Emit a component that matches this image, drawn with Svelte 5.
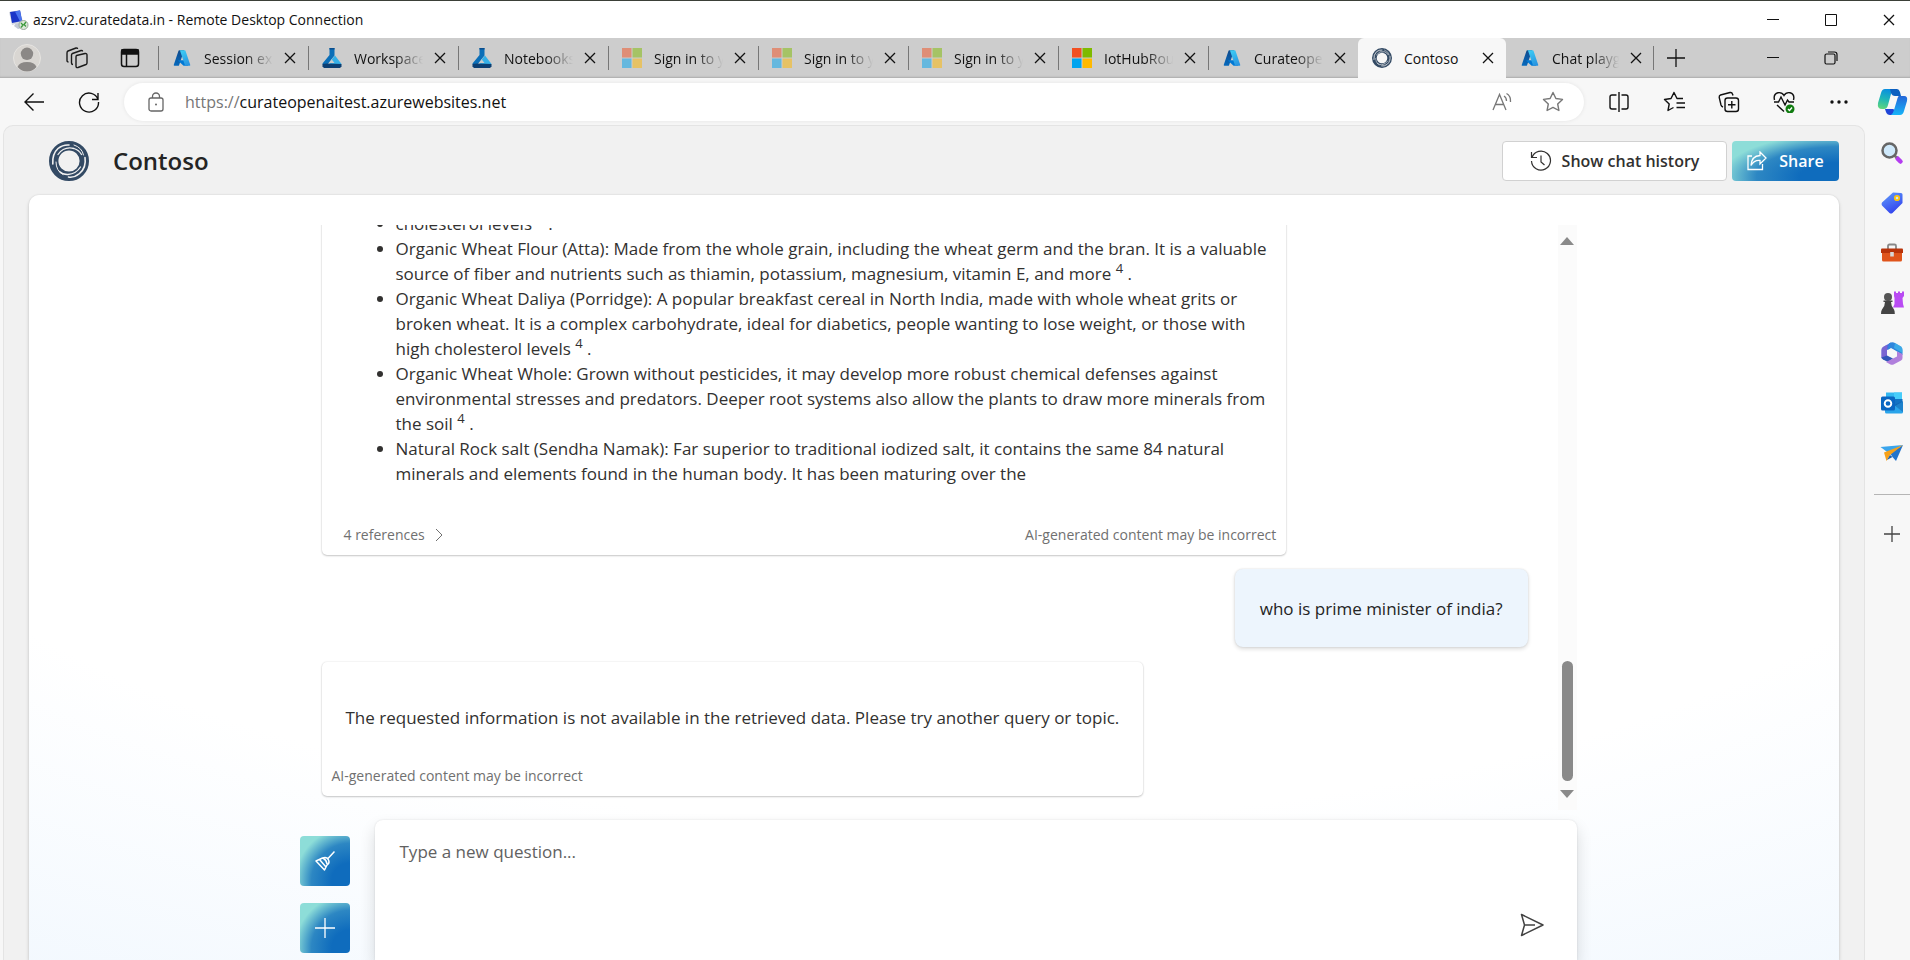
<script lang="ts">
	type Tab = { title: string; icon: string; active?: boolean }

	const tabs: Tab[] = [
		{ title: "Session exp", icon: "azure" },
		{ title: "Workspaces", icon: "lab" },
		{ title: "Notebooks", icon: "lab" },
		{ title: "Sign in to y", icon: "microsoft-faded" },
		{ title: "Sign in to y", icon: "microsoft-faded" },
		{ title: "Sign in to y", icon: "microsoft-faded" },
		{ title: "IotHubRout", icon: "microsoft" },
		{ title: "Curateopen", icon: "azure" },
		{ title: "Contoso", icon: "contoso", active: true },
		{ title: "Chat playgr", icon: "azure" },
	]

	const apps = [
		{ name: "search", label: "Search" },
		{ name: "tag", label: "Shopping" },
		{ name: "toolbox", label: "Tools" },
		{ name: "chess", label: "Games" },
		{ name: "m365", label: "Microsoft 365" },
		{ name: "outlook", label: "Outlook" },
		{ name: "drop", label: "Drop" },
	]

	let question = $state("")
</script>

{#snippet icon(name: string)}
	{#if name === "azure"}
		<svg viewBox="0 0 96 96" width="18" height="18" aria-hidden="true">
			<path fill="url(#azure-dark)" d="M33.3 6.5h26L32.3 86.600a4.200 4.200 0 0 1-3.900 2.900H8.100a4.100 4.100 0 0 1-3.900-5.500L29.400 9.400a4.200 4.200 0 0 1 3.900-2.900z" />
			<path fill="#0078d4" d="M71.200 60.300h-41.300a1.900 1.900 0 0 0-1.300 3.300l26.500 24.700a4.200 4.200 0 0 0 2.900 1.200h23.300z" />
			<path fill="url(#azure-light)" d="M66.600 9.400a4.100 4.100 0 0 0-3.900-2.900H33.600a4.100 4.100 0 0 1 4 2.900L62.800 84a4.100 4.100 0 0 1-4 5.500h29a4.100 4.100 0 0 0 4-5.500z" />
		</svg>
	{:else if name === "lab"}
		<svg viewBox="0 0 20 20" width="20" height="20" aria-hidden="true">
			<path fill="#0b6fb8" d="M7.500 0h5v7.500l-2 2.500L5 17H1L.500 15.500 7.500 7z" />
			<path fill="#0a4d8c" d="M7.500 0h5v1.500h-5z" />
			<path fill="#35b0e8" d="M10.500 10.500 13 7.500l6.500 8.500-1.500 2H7z" />
			<path fill="#cdcdcd" d="m9.800 11.500 2.700 3.500H7.500z" />
			<path fill="#0c3f73" d="M.500 16 5 15.500 19.500 16v2.500L18 20H2L.500 18.500z" />
		</svg>
	{:else if name === "microsoft" || name === "microsoft-faded"}
		<svg viewBox="0 0 21 21" width="20" height="20" opacity={name === "microsoft" ? 1 : 0.5} aria-hidden="true">
			<path fill="#f25022" d="M0 0h10v10H0z" />
			<path fill="#7fba00" d="M11 0h10v10H11z" />
			<path fill="#00a4ef" d="M0 11h10v10H0z" />
			<path fill="#ffb900" d="M11 11h10v10H11z" />
		</svg>
	{:else if name === "contoso"}
		<svg class="contoso" viewBox="0 0 40 40" fill="none" stroke="#f1f1f1" stroke-linecap="round" aria-hidden="true">
			<circle cx="20" cy="20" r="15.300" stroke="#334a64" stroke-width="9.400" />
			<path stroke-width="1.600" d="M3.800 23Q3 13 9 7.500 14 3.500 20 4" />
			<path stroke-width="1.300" d="M9 13.500Q15 5 25 7.500q5 1.500 7.500 6" />
			<path stroke-width="1.600" d="M36 16.500q1.500 10-5.500 16Q25 37 19.500 36" />
			<path stroke-width="1.300" d="M31.500 26Q27 33 19 33.500q-5 .300-8.500-3" />
			<path stroke-width="1" d="M7 21q0 9 7 12.500M25 4q8 2.500 9.500 10" />
		</svg>
	{:else if name === "search"}
		<svg viewBox="0 0 24 24" width="24" height="24" aria-hidden="true">
			<path stroke="#b43cf0" stroke-width="4.500" stroke-linecap="round" d="m17.500 17.500 3 3" />
			<path stroke="#777" stroke-width="2.500" d="m13.500 13.500 3 3" />
			<circle cx="9.500" cy="9.500" r="7" fill="#cfe9fb" stroke="#666" stroke-width="2.500" />
		</svg>
	{:else if name === "tag"}
		<svg viewBox="0 0 24 24" width="24" height="24" aria-hidden="true">
			<path fill="url(#tag-blue)" d="M13 1.500 21 2q1.500 0 1.500 1.500V12L12.500 22q-1.500 1-3 0L2 14.500q-1-1.500 0-3z" />
			<circle cx="17" cy="7" r="2.200" fill="#cfe0ff" stroke="#fdc60a" stroke-width="1.800" />
		</svg>
	{:else if name === "toolbox"}
		<svg viewBox="0 0 24 24" width="24" height="24" aria-hidden="true">
			<path fill="none" stroke="#888" stroke-width="1.800" d="M8 8V5q0-1.500 1.500-1.500h5Q16 3.500 16 5v3" />
			<path fill="#e0541b" d="M2 11h20v8q0 1.500-1.500 1.500h-17Q2 20.500 2 19z" />
			<path fill="#b8330a" d="M2 7.500h20q1 0 1 1V12H1V8.500q0-1 1-1z" />
			<path fill="#d8d8d8" d="M10.200 11h3.600v4.500h-3.600z" />
		</svg>
	{:else if name === "chess"}
		<svg viewBox="0 0 24 24" width="24" height="24" aria-hidden="true">
			<path fill="#b94bf3" d="M14 .500h2V2h2V.500h2V2h2V.500h2V5l-1.500 2 .500 6 1 3.500H13l1.500-3.500V7L14 5z" />
			<circle cx="8" cy="6" r="4" fill="#555" />
			<path fill="#444" d="M3.500 9.500h9V11H11q0 4 3 7.500.800 1 .800 4.500H1q0-3.500 1-4.500 3-3.500 3-7.500H3.500z" />
		</svg>
	{:else if name === "m365"}
		<svg viewBox="0 0 24 24" width="24" height="24" aria-hidden="true">
			<path fill="#4f6be0" d="M11 1.500 3 6Q1.500 7 1.500 9v8L7 15.500V9l5-3z" />
			<path fill="#8b62cc" d="M1.500 9q0-2 1.500-3l4-2.300V15.500l-5.500 1.700z" opacity=".7" />
			<path fill="#2f86dc" d="M9 2.500q3-2 6-.500l6 3.500Q22.500 6.500 22.500 9v5l-5.500-3.500L11 7 7.500 9z" />
			<path fill="#45c3f0" d="M15 2l6 3.500q1.500 1 1.500 3.500v3L14 7z" opacity=".6" />
			<path fill="#3155b8" d="M1.500 16.500 7 14.500l6 3L8 21l-5-2.500q-1.500-1-1.500-2z" />
			<path fill="#b07fdc" d="M22.500 13v4q0 1.500-1.500 2.500l-7 3.800q-2 1-4 0L6 21l11-5.500v-5z" />
			<path fill="#f7f7f7" d="m12 8 4 2.300v4L12 16.500l-4-2.200v-4z" />
		</svg>
	{:else if name === "outlook"}
		<svg viewBox="0 0 24 24" width="24" height="24" aria-hidden="true">
			<path fill="#35b8f1" d="M6 1.500h16V13H6z" />
			<path fill="#1272c4" d="M13 8h9.500v10H13z" />
			<path fill="#47cdfa" d="M14 1.500h8V8h-8z" />
			<path fill="#2aa4ea" d="M5 15.500h9l9-5V21q0 1.500-1.500 1.500h-15Q5 22.500 5 21z" />
			<path fill="#0f5eac" d="m14 14 9-4v11z" opacity=".5" />
			<rect x="1" y="5.500" width="14" height="14" rx="1.500" fill="#0a66c2" />
			<circle cx="8" cy="12.500" r="3.300" fill="none" stroke="#fff" stroke-width="1.900" />
		</svg>
	{:else if name === "drop"}
		<svg viewBox="0 0 24 24" width="24" height="24" aria-hidden="true">
			<path fill="#3aa5ec" d="M.500 6 23 4 8.500 12z" />
			<path fill="#2274cc" d="m23 4-7 16-3.500-4-2.500-4z" />
			<path fill="#f6a11a" d="M23 4 4 11.500 6.500 20l3.500-6z" />
			<path fill="#1b5faf" d="m10 14 2.500 2-5.500 3z" />
		</svg>
	{:else if name === "copilot"}
		<svg viewBox="0 0 32 32" width="32" height="32" aria-hidden="true">
			<path fill="url(#copilot-left)" d="M9 3h9q-2 1-3 5l-3 11q-1 4-4 4H6q-5 0-4-6L5 7q1-4 4-4z" />
			<path fill="#0b5fc0" d="M14 3h7q2 0 3 3l1 4h-6q-3 0-4-3z" />
			<path fill="#1f45d8" d="M9 23h8l2 1-2 5h-3q-3 0-4-3z" />
			<path fill="url(#copilot-right)" d="M23 10h5q4 0 3 5l-3 10q-1 4-4 4h-9q2-1 3-5l3-10q1-4 2-4z" />
		</svg>
	{:else if name === "close"}
		<svg viewBox="0 0 12 12" width="12" height="12" fill="none" stroke="currentColor" stroke-width="1.300" aria-hidden="true">
			<path d="m1 1 10 10M11 1 1 11" />
		</svg>
	{:else if name === "minimize"}
		<svg viewBox="0 0 12 12" width="12" height="12" fill="none" stroke="currentColor" aria-hidden="true">
			<path d="M0 5.500h12" />
		</svg>
	{:else if name === "maximize"}
		<svg viewBox="0 0 12 12" width="12" height="12" fill="none" stroke="currentColor" aria-hidden="true">
			<path d="M.500.500h11v11H.500z" />
		</svg>
	{:else if name === "restore"}
		<svg viewBox="0 0 14 14" width="14" height="14" fill="none" stroke="currentColor" stroke-width="1.200" aria-hidden="true">
			<rect x="1" y="3" width="10" height="10" rx="1.500" />
			<path d="M4 1h6.500Q13 1 13 3.500V10" />
		</svg>
	{/if}
{/snippet}

{#snippet windowButtons(middle: string)}
	<div class="window-buttons">
		<button aria-label="Minimize">{@render icon("minimize")}</button>
		<button aria-label="Maximize">{@render icon(middle)}</button>
		<button aria-label="Close window">{@render icon("close")}</button>
	</div>
{/snippet}

<svg class="defs" width="0" height="0" aria-hidden="true">
	<defs>
		<linearGradient id="azure-dark" x1="0.600" y1="0" x2="0.300" y2="1">
			<stop offset="0" stop-color="#114a8b" />
			<stop offset="1" stop-color="#0669bc" />
		</linearGradient>
		<linearGradient id="azure-light" x1="0.300" y1="0" x2="0.700" y2="1">
			<stop offset="0" stop-color="#3ccbf4" />
			<stop offset="1" stop-color="#2892df" />
		</linearGradient>
		<linearGradient id="tag-blue" x1="0" y1="0" x2="0.500" y2="1">
			<stop offset="0" stop-color="#62a0fb" />
			<stop offset="1" stop-color="#3445ee" />
		</linearGradient>
		<linearGradient id="copilot-left" x1="0.500" y1="0" x2="0.300" y2="1">
			<stop offset="0" stop-color="#0a8fe0" />
			<stop offset="0.500" stop-color="#1fb6b8" />
			<stop offset="1" stop-color="#5fd67c" />
		</linearGradient>
		<linearGradient id="copilot-right" x1="0.500" y1="0" x2="0.500" y2="1">
			<stop offset="0" stop-color="#2466d8" />
			<stop offset="1" stop-color="#16b4f8" />
		</linearGradient>
	</defs>
</svg>

<div class="window">
	<header class="title-bar">
		<svg viewBox="0 0 20 20" width="20" height="20" aria-hidden="true">
			<path fill="#c3c9d6" d="M7 13h7l3 4-8 2-4-3z" />
			<path fill="#d5d9e2" d="m0 2 11-2 3 12-11 3z" />
			<path fill="#1a35c8" d="m1 2 10-1.500 2 10.500-10 2z" />
			<path fill="#4a74ee" d="m6 1.500 5-1 2 10.500-2 .500z" />
			<circle cx="14.500" cy="15" r="4.500" fill="#dbe8d8" stroke="#9aa89a" />
			<path fill="none" stroke="#3c9a3c" stroke-width="1.300" d="m12 13 2 2-2 2.500M17 12l-2 2.500 2 2" />
		</svg>
		<span class="title">azsrv2.curatedata.in - Remote Desktop Connection</span>
		{@render windowButtons("maximize")}
	</header>

	<div class="tab-strip">
		<div class="strip-tools">
			<button aria-label="Profile">
				<svg viewBox="0 0 28 28" width="28" height="28" aria-hidden="true">
					<circle cx="14" cy="14" r="13.500" fill="#d9d6d2" stroke="#e6e4e1" />
					<circle cx="14" cy="9.800" r="6.200" fill="#8b8886" />
					<path fill="#8b8886" d="M4.500 23q2-5 9.500-5t9.500 5q-4 4.500-9.500 4.500T4.500 23z" />
				</svg>
			</button>
			<button aria-label="Workspaces">
				<svg viewBox="0 0 22 22" width="22" height="22" fill="none" stroke="#1b1b1b" stroke-width="1.400" stroke-linejoin="round" aria-hidden="true">
					<path d="m10.500 8.500 8.500-2q2-.300 2 1.500v8q0 1-1 1.500l-8 3q-2 .500-2-1.500v-9q0-1 .500-1.500z" />
					<path d="M7 17.500q-1.500 0-1.500-1.500V8q0-1 1-1.500l8.500-3q1.500-.300 1.500 1" />
					<path d="M2.500 15Q1 15 1 13.500V6q0-1.500 1-2l8-3q1.500-.300 1.500 1" />
				</svg>
			</button>
			<button aria-label="Tab actions">
				<svg viewBox="0 0 20 20" width="20" height="20" fill="none" stroke="#111" stroke-width="1.500" aria-hidden="true">
					<rect x="1.500" y="1.500" width="17" height="17" rx="2.500" />
					<path fill="#111" d="M2 2h16v4H2z" />
					<path d="M6.500 6v12" />
				</svg>
			</button>
		</div>
		<div class="tabs">
			{#each tabs as tab}
				<div class="tab" class:active={tab.active}>
					<span class="favicon">{@render icon(tab.icon)}</span>
					<span class="tab-title">{tab.title}</span>
					<button class="tab-close" aria-label="Close tab">{@render icon("close")}</button>
				</div>
			{/each}
		</div>
		<button class="new-tab" aria-label="New tab">
			<svg viewBox="0 0 18 18" width="18" height="18" stroke="#111" stroke-width="1.300" aria-hidden="true"><path d="M9 0v18M0 9h18" /></svg>
		</button>
		{@render windowButtons("restore")}
	</div>

	<div class="toolbar">
		<button class="nav" aria-label="Back">
			<svg viewBox="0 0 22 20" width="22" height="20" fill="none" stroke="#111" stroke-width="1.400" aria-hidden="true"><path d="M10.500 1.500 2 10l8.500 8.500M2 10h19" /></svg>
		</button>
		<button class="nav" aria-label="Refresh">
			<svg viewBox="0 0 22 22" width="22" height="22" fill="none" stroke="#111" stroke-width="1.400" aria-hidden="true"><path d="M20 8.500A9.500 9.500 0 1 0 20.500 11M20 2v6.500h-6" /></svg>
		</button>
		<div class="address">
			<svg viewBox="0 0 16 20" width="16" height="20" fill="none" stroke="#666" stroke-width="1.300" aria-hidden="true">
				<rect x="1" y="6" width="14" height="13" rx="2" />
				<path d="M4.500 6V4.500a3.500 3.500 0 0 1 7 0V6" />
				<circle cx="8" cy="12.500" r="1" fill="#666" stroke="none" />
			</svg>
			<a href="https://curateopenaitest.azurewebsites.net"><span>https://</span>curateopenaitest.azurewebsites.net</a>
			<button class="in-address" aria-label="Read aloud">
				<svg viewBox="0 0 22 20" width="22" height="20" fill="none" stroke="#777" stroke-width="1.300" aria-hidden="true">
					<path d="M1 18 7.500 2.500 14 18M3.500 12.500h8M12 4q2.500 1.500 2.500 5M14.500 1.500Q19 4 18.500 10" />
				</svg>
			</button>
			<button class="in-address" aria-label="Add to favorites">
				<svg viewBox="0 0 22 22" width="22" height="22" fill="none" stroke="#777" stroke-width="1.400" stroke-linejoin="round" aria-hidden="true">
					<path d="m11 1.500 2.900 6 6.600.900-4.800 4.600 1.200 6.500-5.900-3.100-5.900 3.100 1.200-6.500L1.500 8.400l6.600-.900z" />
				</svg>
			</button>
		</div>
		<div class="actions">
			<button aria-label="Split screen">
				<svg viewBox="0 0 20 20" width="20" height="20" fill="none" stroke="#111" stroke-width="1.400" aria-hidden="true"><path d="M7.500 3H3Q1 3 1 5v10q0 2 2 2h4.500M12.500 3H17q2 0 2 2v10q0 2-2 2h-4.500M10 0v20" /></svg>
			</button>
			<button aria-label="Favorites">
				<svg viewBox="0 0 22 22" width="22" height="22" fill="none" stroke="#111" stroke-width="1.400" stroke-linejoin="round" aria-hidden="true"><path d="M20 7.500h-6L11 1.500l-3 6-6.500 1 4.700 4.500L5 19.500l5.500-3M13.500 12H22M13.500 16.500H22" /></svg>
			</button>
			<button aria-label="Collections">
				<svg viewBox="0 0 22 22" width="22" height="22" fill="none" stroke="#111" stroke-width="1.400" aria-hidden="true">
					<rect x="7" y="7" width="13.500" height="13.500" rx="2.500" />
					<path d="M13.800 10v7.500M10 13.800h7.500M5 16q-1.500-.500-2-2L1.200 6.500Q1 4.500 2.500 4L12 1.500q2-.300 2.500 1.500l.500 1.500" />
				</svg>
			</button>
			<button aria-label="Browser essentials">
				<svg viewBox="0 0 22 22" width="22" height="22" fill="none" stroke="#111" stroke-width="1.400" aria-hidden="true">
					<path d="M1.500 9Q0 3 5 1.700q4-.700 6 2.800 2-3.500 6-2.800Q22 3 20.500 9M1 11h4.500l2.500-5 4 8 2.500-5 1.500 2H21M4 14l7 6.500" />
					<circle cx="17" cy="18" r="4.500" fill="#107c10" stroke="none" />
					<path stroke="#fff" d="m15 18 1.500 1.500 2.500-3" />
				</svg>
			</button>
			<button aria-label="Settings and more">
				<svg viewBox="0 0 18 4" width="18" height="4" fill="#111" aria-hidden="true"><circle cx="2" cy="2" r="1.700" /><circle cx="9" cy="2" r="1.700" /><circle cx="16" cy="2" r="1.700" /></svg>
			</button>
		</div>
		<button class="copilot" aria-label="Copilot">{@render icon("copilot")}</button>
	</div>

	<div class="content">
		<div class="page">
			<header class="app-header">
				<span class="logo">{@render icon("contoso")}</span>
				<h1>Contoso</h1>
				<button class="history">
					<svg viewBox="0 0 22 22" width="22" height="22" fill="none" stroke="#323130" stroke-width="1.200" aria-hidden="true"><path d="M1.500 2v5.500H7M2 7.500a9.500 9.500 0 1 1-.500 3.500M11 5.500V12l3.500 3" /></svg>
					Show chat history
				</button>
				<button class="share">
					<svg viewBox="0 0 20 20" width="20" height="20" fill="none" stroke="#fff" stroke-width="1.300" aria-hidden="true"><path d="M5 5H1v13.500h14.500V13M13 1l6 6-6 6V9.500q-6-.500-9 5Q4.500 5 13 4.500z" /></svg>
					Share
				</button>
			</header>

			<main>
				<div class="chat">
					<div class="stream">
						<div class="messages">
							<article class="answer">
								<ul>
									<li>cholesterol levels <sup>4</sup> .</li>
									<li>Organic Wheat Flour (Atta): Made from the whole grain, including the wheat germ and the bran. It is a valuable source of fiber and nutrients such as thiamin, potassium, magnesium, vitamin E, and more <sup>4</sup> .</li>
									<li>Organic Wheat Daliya (Porridge): A popular breakfast cereal in North India, made with whole wheat grits or broken wheat. It is a complex carbohydrate, ideal for diabetics, people wanting to lose weight, or those with high cholesterol levels <sup>4</sup> .</li>
									<li>Organic Wheat Whole: Grown without pesticides, it may develop more robust chemical defenses against environmental stresses and predators. Deeper root systems also allow the plants to draw more minerals from the soil <sup>4</sup> .</li>
									<li>Natural Rock salt (Sendha Namak): Far superior to traditional iodized salt, it contains the same 84 natural minerals and elements found in the human body. It has been maturing over the</li>
								</ul>
								<footer>
									<button class="references">
										4 references
										<svg viewBox="0 0 8 14" width="8" height="14" fill="none" stroke="#707070" aria-hidden="true"><path d="m1 1 6 6-6 6" /></svg>
									</button>
									<span>AI-generated content may be incorrect</span>
								</footer>
							</article>
							<div class="question">who is prime minister of india?</div>
							<article class="answer">
								<p>The requested information is not available in the retrieved data. Please try another query or topic.</p>
								<footer><span>AI-generated content may be incorrect</span></footer>
							</article>
						</div>
						<div class="scrollbar" aria-hidden="true">
							<svg viewBox="0 0 14 8" width="14" height="8" fill="#8a8a8a"><path d="m7 0 7 8H0z" /></svg>
							<div class="thumb"></div>
							<svg viewBox="0 0 14 8" width="14" height="8" fill="#8a8a8a"><path d="M0 0h14L7 8z" /></svg>
						</div>
					</div>

					<div class="compose">
						<div class="compose-actions">
							<button aria-label="Clear chat">
								<svg viewBox="0 0 20 20" width="20" height="20" fill="none" stroke="#fff" stroke-width="1.500" stroke-linejoin="round" aria-hidden="true"><path d="m19.500.500-6.500 7M1 10l6.500-3q4.500-1.500 6 2t-1.500 5L9.500 19zM4.500 8.500 11 16M8 7q3.500 2 4 6" /></svg>
							</button>
							<button aria-label="New chat">
								<svg viewBox="0 0 20 20" width="20" height="20" stroke="#fff" stroke-width="1.300" aria-hidden="true"><path d="M10 0v20M0 10h20" /></svg>
							</button>
						</div>
						<div class="input-box">
							<textarea bind:value={question} aria-label="Question" placeholder="Type a new question..."></textarea>
							<button class="send" aria-label="Send">
								<svg viewBox="0 0 24 24" width="24" height="24" fill="none" stroke="#424242" stroke-width="1.500" stroke-linejoin="round" aria-hidden="true"><path d="M1.500 1.500 23 12 1.500 22.500 4.500 12zM4.500 12H15" /></svg>
							</button>
						</div>
					</div>
				</div>
			</main>
		</div>

		<nav class="sidebar">
			{#each apps as app}
				<button aria-label={app.label}>{@render icon(app.name)}</button>
			{/each}
			<hr />
			<button aria-label="Customize">
				<svg viewBox="0 0 16 16" width="16" height="16" stroke="#444" stroke-width="1.300" aria-hidden="true"><path d="M8 0v16M0 8h16" /></svg>
			</button>
		</nav>
	</div>
</div>

<style>
	:global(body) {
		margin: 0;
		overflow: hidden;
	}

	* {
		box-sizing: border-box;
	}

	svg {
		display: block;
		flex: none;
	}

	button {
		display: flex;
		align-items: center;
		justify-content: center;
		flex: none;
		margin: 0;
		padding: 0;
		border: none;
		background: none;
		color: inherit;
		font: inherit;
		cursor: pointer;
	}

	.defs {
		position: absolute;
	}

	.window {
		display: flex;
		flex-direction: column;
		height: 100vh;
		border-top: 1px solid #3b4038;
		background-color: #f7f7f7;
		color: #111;
		font-family: "Open Sans", "Segoe UI", sans-serif;
		font-size: 14px;
	}

	.title-bar {
		display: flex;
		align-items: center;
		flex: none;
		height: 37px;
		padding-left: 9px;
		gap: 4px;
		background-color: white;
	}

	.title {
		flex: 1;
	}

	.window-buttons {
		display: flex;
		margin-left: auto;
	}

	.window-buttons button {
		width: 58px;
		height: 36px;
	}

	.window-buttons button:last-child {
		width: 50px;
		padding-left: 8px;
	}

	.tab-strip {
		display: flex;
		align-items: center;
		flex: none;
		height: 40px;
		background-color: #cdcdcd;
		box-shadow: inset 0 -2px 2px -1px #aaa;
	}

	.strip-tools {
		display: flex;
		align-items: center;
		flex: none;
		width: 158px;
		padding-left: 13px;
		gap: 32px;
	}

	.strip-tools button:nth-child(2) {
		margin-left: -7px;
	}

	.tabs {
		display: flex;
		flex: 1;
		max-width: 1496px;
		height: 40px;
	}

	.tab {
		display: flex;
		align-items: center;
		flex: 1;
		min-width: 0;
		padding: 0 11px 0 14px;
		background: linear-gradient(#777, #777) left center / 1px 24px no-repeat;
	}

	.tab.active,
	.tab:last-child {
		max-width: 148px;
	}

	.tab.active {
		background: #f7f7f7;
		border-radius: 6px 6px 0 0;
	}

	.tab:last-child {
		background: linear-gradient(#777, #777) right center / 1px 24px no-repeat;
	}

	.favicon {
		display: flex;
		justify-content: center;
		flex: none;
		width: 20px;
	}

	.favicon .contoso {
		width: 20px;
		height: 20px;
	}

	.tab-title {
		flex: 1;
		min-width: 0;
		margin: 0 10px 0 12px;
		overflow: hidden;
		white-space: nowrap;
		mask-image: linear-gradient(to right, black 60%, transparent);
	}

	.active .tab-title {
		mask-image: none;
	}

	.tab-close {
		width: 14px;
		height: 20px;
	}

	.new-tab {
		width: 44px;
		height: 40px;
	}

	.toolbar {
		display: flex;
		align-items: center;
		flex: none;
		height: 47px;
		padding-left: 6px;
	}

	.nav {
		width: 55px;
		height: 40px;
	}

	.address {
		display: flex;
		align-items: center;
		flex: 1;
		height: 38px;
		margin-left: 8px;
		padding: 0 6px 0 24px;
		border-radius: 19px;
		background-color: white;
		box-shadow: 0 0 4px #00000014;
	}

	.address a {
		flex: 1;
		margin-left: 21px;
		color: #111;
		font-size: 16px;
		text-decoration: none;
	}

	.address a span {
		color: #767676;
	}

	.in-address {
		width: 50px;
		height: 36px;
	}

	.actions {
		display: flex;
		padding-left: 7px;
	}

	.actions button {
		width: 55px;
		height: 40px;
	}

	.copilot {
		width: 44px;
		padding-left: 8px;
	}

	.content {
		display: flex;
		flex: 1;
		min-height: 0;
	}

	.page {
		display: flex;
		flex-direction: column;
		flex: 1;
		min-width: 0;
		margin-left: 3px;
		padding: 0 25px;
		border: 1px solid #e4e4e4;
		border-bottom: none;
		border-radius: 10px 10px 0 0;
		background-color: #f1f1f1;
	}

	.app-header {
		display: flex;
		align-items: center;
		flex: none;
		height: 69px;
		padding-left: 20px;
	}

	.logo .contoso {
		width: 40px;
		height: 40px;
	}

	h1 {
		flex: 1;
		margin: 0 0 0 24px;
		color: #242424;
		font-size: 24px;
		font-weight: 600;
	}

	.history,
	.share {
		height: 40px;
		font-size: 16px;
		font-weight: 600;
	}

	.history {
		width: 225px;
		gap: 10px;
		border: 1px solid #d1d1d1;
		border-radius: 4px;
		background-color: white;
		color: #323130;
	}

	.share {
		width: 107px;
		margin-left: 5px;
		gap: 12px;
		color: white;
	}

	.share,
	.compose-actions button {
		border-radius: 4px;
		background: radial-gradient(109.81% 107.82% at 100.1% 90.19%, #0f6cbd 33.63%, #2d87c3 70.31%, #8dddd8 100%);
	}

	main {
		display: flex;
		justify-content: center;
		flex: 1;
		min-height: 0;
		border-radius: 10px 10px 0 0;
		background: radial-gradient(108.78% 108.78% at 50.02% 19.78%, #ffffff 57.29%, #eef6fe 100%);
		box-shadow: 0 2px 4px #00000024, 0 0 2px #0000001f;
	}

	.chat {
		display: flex;
		flex-direction: column;
		width: 100%;
		max-width: 1285px;
		padding-top: 30px;
	}

	.stream {
		display: flex;
		flex: 1;
		min-height: 0;
	}

	.messages {
		display: flex;
		flex-direction: column;
		justify-content: flex-end;
		flex: 1;
		padding: 0 30px 14px;
		overflow: hidden;
		color: #323130;
		font-size: 17px;
		line-height: 25px;
	}

	.answer {
		align-self: flex-start;
		flex: none;
		max-width: 80%;
		padding: 0 10px 10px;
		border-radius: 5px;
		background-color: white;
		box-shadow: 0 1px 2px #00000033, 0 0 2px #0000001f;
	}

	.answer ul {
		margin: 0 0 39px;
		padding-left: 64px;
	}

	.answer sup {
		font-size: 13px;
		line-height: 0;
	}

	.answer p {
		margin: 0;
		padding: 43px 14px 36px;
	}

	.answer footer {
		display: flex;
		align-items: center;
		justify-content: space-between;
		height: 20px;
		color: #707070;
		font-size: 14px;
		line-height: 20px;
	}

	.references {
		margin-left: 12px;
		gap: 10px;
	}

	.question {
		align-self: flex-end;
		flex: none;
		margin: 14px 0 15px;
		padding: 27px 25px 26px;
		border-radius: 8px;
		background-color: #edf5fd;
		color: #242424;
		box-shadow: 0 2px 4px #00000024, 0 0 2px #0000001f;
	}

	.scrollbar {
		display: flex;
		flex-direction: column;
		align-items: center;
		width: 19px;
		padding: 12px 0;
		background-color: #fbfbfb;
	}

	.thumb {
		width: 11px;
		height: 120px;
		margin: auto 0 9px;
		border-radius: 6px;
		background-color: #8a8a8a;
	}

	.compose {
		display: flex;
		flex: none;
		height: 140px;
		margin-top: 10px;
		padding-left: 8px;
		gap: 25px;
	}

	.compose-actions {
		display: flex;
		flex-direction: column;
		padding-top: 16px;
		gap: 17px;
	}

	.compose-actions button {
		width: 50px;
		height: 50px;
	}

	.input-box {
		display: flex;
		align-items: flex-end;
		flex: 1;
		border-radius: 8px 8px 0 0;
		background-color: white;
		box-shadow: 0 8px 16px #00000024, 0 0 2px #0000001f;
	}

	textarea {
		flex: 1;
		align-self: stretch;
		padding: 19px 25px;
		border: none;
		outline: none;
		resize: none;
		background: none;
		color: #242424;
		font: inherit;
		font-size: 17px;
		line-height: 25px;
	}

	textarea::placeholder {
		color: #616161;
	}

	.send {
		margin: 0 33px 23px 0;
	}

	.sidebar {
		display: flex;
		flex-direction: column;
		align-items: center;
		flex: none;
		width: 45px;
		padding: 3px 0 0 8px;
	}

	.sidebar button {
		width: 36px;
		height: 50px;
	}

	.sidebar hr {
		width: 36px;
		margin: 16px 0 14px;
		border: none;
		border-top: 1px solid #b5b5b5;
	}
</style>
